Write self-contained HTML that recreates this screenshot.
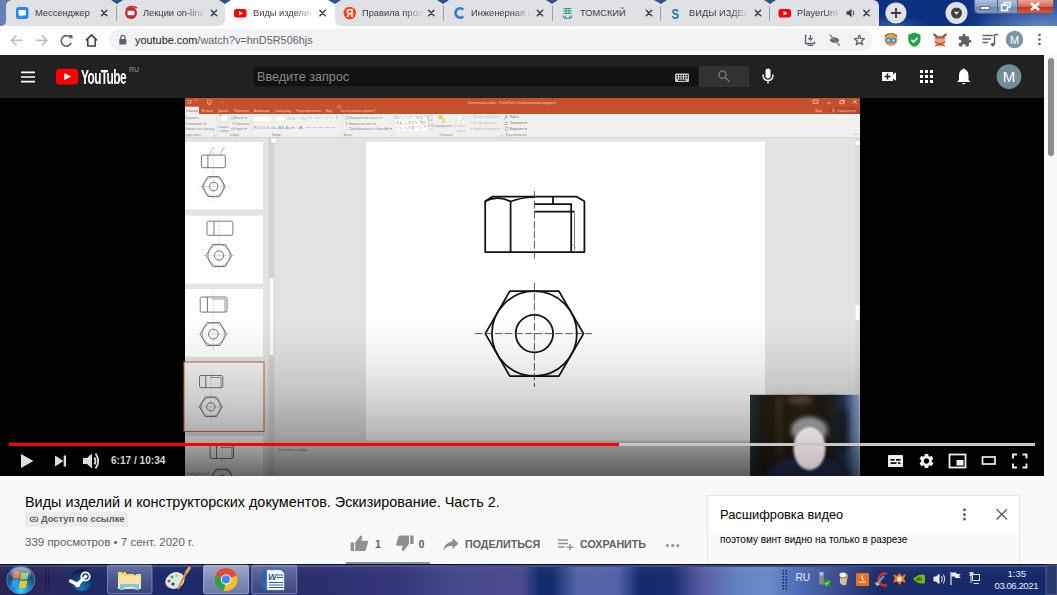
<!DOCTYPE html>
<html><head><meta charset="utf-8">
<style>
*{box-sizing:border-box;margin:0;padding:0}
html,body{width:1057px;height:595px;overflow:hidden;background:#f9f9f9;font-family:"Liberation Sans",sans-serif}
.a{position:absolute}
#frame{left:0;top:0;width:1057px;height:26px;background:radial-gradient(ellipse 70px 20px at 1040px 26px,rgba(120,150,210,.75),rgba(120,150,210,0)),radial-gradient(ellipse 40px 10px at 890px 26px,rgba(90,130,200,.5),rgba(90,130,200,0)),linear-gradient(90deg,#6a7fb2 0,#5a74ae 6px,#2f5aa0 700px,#0c3282 880px,#0a2f7e 960px,#2a5aa8 1057px)}
.tab{top:0;height:26px;background:#dfe1e5}
.tt{top:6.5px;font-size:9.3px;line-height:12px;color:#3c4043;white-space:nowrap;overflow:hidden}
#toolbar{left:0;top:26px;width:1057px;height:29px;background:#fff}
#omni{left:109px;top:29px;width:764px;height:22px;border-radius:11px;background:#f1f3f4}
#ythead{left:0;top:55px;width:1044px;height:43px;background:#212121}
#player{left:0;top:98px;width:1045px;height:378px;background:#000;overflow:hidden}
#sb{left:1044px;top:55px;width:13px;height:509px;background:#f9f9f9}
#task{left:0;top:564px;width:1057px;height:31px;background:linear-gradient(rgba(255,255,255,.05),rgba(255,255,255,0) 40%),linear-gradient(90deg,#2a2454 0,#2a2860 50px,#1c2a68 110px,#1e2a6a 260px,#2c2f6c 310px,#34367a 400px,#46488e 455px,#4a4a90 522px,#122c6c 540px,#142c6c 552px,#5466a8 578px,#5262aa 618px,#142a6e 640px,#1a2c70 672px,#5858a0 700px,#6080c0 735px,#6a8ac8 768px,#5070b8 795px,#3a4a8c 840px,#1a2c6c 880px,#14286a 1057px)}
.sep{top:6px;width:1px;height:15px;background:#9aa0a6}
.fade{-webkit-mask-image:linear-gradient(90deg,#000 70%,transparent)}
.fade2{-webkit-mask-image:linear-gradient(90deg,#000 70%,transparent)}
</style></head><body>
<div id="frame" class="a"></div>

<!-- TAB STRIP -->
<div class="a" style="left:6px;top:0;width:873px;height:26px;background:#dfe1e5;border-radius:6px 6px 0 0"></div>
<div class="a" style="left:219px;top:20px;width:122px;height:6px;background:#fff"></div>
<div class="a" style="left:213px;top:14px;width:12px;height:12px;background:#dfe1e5;border-radius:0 0 6px 0"></div>
<div class="a" style="left:335px;top:14px;width:12px;height:12px;background:#dfe1e5;border-radius:0 0 0 6px"></div>
<div class="a" style="left:225px;top:0;width:110px;height:26px;background:#fff;border-radius:6px 6px 0 0"></div>
<svg class="a" style="left:0;top:0" width="1057" height="6">
<g fill="#2d4f93">
<path d="M111 0 L123 0 L117 4 Z"/><path d="M219 0 L231 0 L225 4 Z"/><path d="M328 0 L341 0 L335 4 Z"/>
<path d="M437 0 L449 0 L443 4 Z"/><path d="M546 0 L558 0 L552 4 Z"/><path d="M654 0 L667 0 L661 4 Z"/><path d="M764 0 L776 0 L770 4 Z"/>
</g></svg>
<div class="a sep" style="left:116px"></div><div class="a sep" style="left:443px"></div><div class="a sep" style="left:552px"></div><div class="a sep" style="left:660px"></div><div class="a sep" style="left:769px"></div>
<div class="a tt" style="left:35px;width:60px">Мессенджер</div>
<div class="a tt fade" style="left:143px;width:62px">Лекции on-line</div>
<div class="a tt fade2" style="left:253px;width:61px">Виды изделий и</div>
<div class="a tt fade" style="left:362px;width:61px">Правила прохождения</div>
<div class="a tt fade" style="left:471px;width:60px">Инженерная графика</div>
<div class="a tt" style="left:580px;width:60px">ТОМСКИЙ</div>
<div class="a tt fade" style="left:689px;width:60px">ВИДЫ ИЗДЕЛИЙ</div>
<div class="a tt fade" style="left:797px;width:42px">PlayerUnknown</div>
<svg class="a" style="left:0;top:0" width="1057" height="26">
<g stroke="#3c4043" stroke-width="1.5" stroke-linecap="round">
<path d="M101.5 10.3 L106.9 15.7 M106.9 10.3 L101.5 15.7"/>
<path d="M211.3 10.3 L216.7 15.7 M216.7 10.3 L211.3 15.7"/>
<path d="M319.9 10.3 L325.3 15.7 M325.3 10.3 L319.9 15.7"/>
<path d="M428.6 10.3 L434 15.7 M434 10.3 L428.6 15.7"/>
<path d="M537.3 10.3 L542.7 15.7 M542.7 10.3 L537.3 15.7"/>
<path d="M646.3 10.3 L651.7 15.7 M651.7 10.3 L646.3 15.7"/>
<path d="M755.3 10.3 L760.7 15.7 M760.7 10.3 L755.3 15.7"/>
<path d="M863.8 10.3 L869.2 15.7 M869.2 10.3 L863.8 15.7"/>
</g>
<!-- favicons -->
<rect x="16" y="7" width="12.5" height="12" rx="2.8" fill="#2787f5"/>
<path d="M18.6 10 H25.9 V15.6 H22.4 L20.9 17 V15.6 H18.6 Z" fill="#fff"/>
<circle cx="131" cy="13" r="6" fill="#c8252c"/><rect x="127.6" y="10.8" width="6.8" height="4.4" fill="#fff"/><path d="M126 9 Q131 4.5 137 8" stroke="#c8252c" stroke-width="1.6" fill="none"/>
<rect x="234" y="9" width="12.5" height="8.6" rx="2.5" fill="#f00"/><path d="M239 11 L243 13.3 L239 15.6 Z" fill="#fff"/>
<circle cx="349.8" cy="13" r="6.3" fill="#fc3f1d"/><text x="346.3" y="17.3" font-size="10" font-weight="bold" fill="#fff" font-family="Liberation Sans">Я</text>
<path d="M463.2 9.6 A4.6 4.6 0 1 0 463.2 16.4" stroke="#3a7ad0" stroke-width="2.8" fill="none"/>
<g fill="none" stroke="#2a9d8f" stroke-width="1.1"><path d="M563.5 8.5 H571.5 M563 11 H572 M563.5 13.5 H571.5 M566 8 V13.5 M569 8 V13.5 M563 15.5 Q563 18.5 567.5 18.5 Q572 18.5 572 15.5 M565.5 15.5 V18 M569.5 15.5 V18"/></g>
<text x="671.5" y="18.8" font-size="14" font-weight="bold" fill="#1a78b0" font-family="Liberation Sans" transform="translate(671.5 0) scale(0.8 1) translate(-671.5 0)">S</text>
<rect x="778.5" y="9" width="12.5" height="8.6" rx="2.5" fill="#f00"/><path d="M783.5 11 L787.5 13.3 L783.5 15.6 Z" fill="#fff"/>
<path d="M846.5 11.2 H848.5 L851.5 8.8 V17.2 L848.5 14.8 H846.5 Z" fill="#3c4043"/><path d="M853 10.5 Q854.6 13 853 15.5" stroke="#3c4043" stroke-width="1" fill="none"/>
<!-- new tab + profile -->
<circle cx="896" cy="13" r="10.6" fill="#dfe1e5"/><path d="M891 13 H901 M896 8 V18" stroke="#3c4043" stroke-width="1.8"/>
<circle cx="956.5" cy="13" r="11" fill="#dfe1e5"/><circle cx="956.5" cy="13" r="5.5" fill="#3c4043"/><path d="M953.8 11.8 H959.2 L956.5 15 Z" fill="#dfe1e5"/>
</svg>
<!-- window controls -->
<div class="a" style="left:974px;top:0;width:80px;height:14px;border:1px solid #4a5f8a;border-top:none;border-radius:0 0 5px 5px;overflow:hidden;background:linear-gradient(#aebfd9,#8aa2c6 50%,#6f8ab4 51%,#7f98c0)">
 <div class="a" style="left:22px;top:0;width:1px;height:14px;background:#4a5f8a"></div>
 <div class="a" style="left:42px;top:0;width:37px;height:14px;background:linear-gradient(#e8a598,#d46450 50%,#c2331c 51%,#d5634a);border-left:1px solid #4a5f8a"></div>
</div>
<svg class="a" style="left:974px;top:0" width="83" height="14">
<rect x="6.5" y="6.5" width="9" height="3" fill="#fff" stroke="#384a6e" stroke-width="0.7"/>
<rect x="30" y="2.5" width="6" height="5" fill="none" stroke="#fff" stroke-width="1.3"/><rect x="27.5" y="5" width="6" height="5.5" fill="#7f98c0" stroke="#fff" stroke-width="1.6"/>
<path d="M57 3 L65 10 M65 3 L57 10" stroke="#fff" stroke-width="2.6"/>
</svg>
<div id="toolbar" class="a"></div>
<div id="omni" class="a"></div>

<!-- TOOLBAR -->
<div class="a" style="left:0;top:14px;width:7px;height:12px;background:#dfe1e5"></div>
<div class="a" style="left:0;top:0;width:6px;height:26px;background:#6a7fb2;border-radius:0 0 5px 0"></div>
<svg class="a" style="left:0;top:26px" width="1057" height="29">
<g transform="translate(0 0.9)"><g fill="none" stroke="#bdc1c6" stroke-width="1.6">
<path d="M22.5 13.5 H11.5 M16.5 8.5 L11.5 13.5 L16.5 18.5"/>
<path d="M36 13.5 H47 M42 8.5 L47 13.5 L42 18.5"/>
</g>
<g fill="none" stroke="#5f6368" stroke-width="1.6">
<path d="M71 11.5 A5.2 5.2 0 1 0 71.2 16"/>
</g>
<path d="M68.5 8 H72.5 V12 Z" fill="#5f6368"/>
<path d="M86 13.5 L91.5 8 L97 13.5 M87.8 12.2 V19 H95.2 V12.2" fill="none" stroke="#3c4043" stroke-width="1.5"/></g>
<!-- lock -->
<rect x="119.3" y="13" width="7" height="5.5" rx="0.6" fill="#5f6368"/>
<path d="M120.8 13 V11.4 A2 2 0 0 1 124.8 11.4 V13" fill="none" stroke="#5f6368" stroke-width="1.3"/>
<!-- omnibox right icons -->
<g fill="none" stroke="#5f6368" stroke-width="1.3">
<path d="M806.5 9.5 H805.5 V17.5 H814.5 V15.5"/><path d="M810.5 9 V14 M808.3 12 L810.5 14.2 L812.7 12"/><path d="M807.5 19.3 H813"/>
<path d="M830 9 L839.5 19.5"/>
</g>
<path d="M829.5 14.2 Q834.5 8.5 839.5 14.2 Q834.5 19.9 829.5 14.2 Z" fill="#5f6368"/>
<path d="M829 8.2 L840.2 20.2" stroke="#f1f3f4" stroke-width="1"/><path d="M829.6 8.6 L840 19.8" stroke="#5f6368" stroke-width="0.9"/>
<path d="M859.40 9.00 L860.75 12.44 L864.44 12.66 L861.59 15.01 L862.52 18.59 L859.40 16.60 L856.28 18.59 L857.21 15.01 L854.36 12.66 L858.05 12.44 Z" fill="none" stroke="#5f6368" stroke-width="1.3" stroke-linejoin="round"/>
<!-- extensions -->
<circle cx="891" cy="13.5" r="6.5" fill="#d9a066"/><path d="M885 11 Q891 4 897 11 L897 9 Q891 5 885 9 Z" fill="#8a5a2a"/>
<circle cx="888.5" cy="14.5" r="2.2" fill="#9fd0f0" stroke="#2d6fb5" stroke-width="1"/><circle cx="893.5" cy="14.5" r="2.2" fill="#9fd0f0" stroke="#2d6fb5" stroke-width="1"/>
<path d="M914.4 6.5 L920.5 8.8 V14 Q920.5 18.5 914.4 21 Q908.3 18.5 908.3 14 V8.8 Z" fill="#1ea446"/><path d="M911.3 13.8 L913.7 16.1 L917.6 11.8" fill="none" stroke="#fff" stroke-width="1.7"/>
<circle cx="940" cy="15" r="5.5" fill="#e8a27a"/><path d="M933.5 8 L937.5 11 M946.5 8 L942.5 11" stroke="#6b4a3a" stroke-width="1.8"/><path d="M934 10.5 H946 L944 12.5 H936 Z" fill="#8a6a5a"/><path d="M935 20 L945 16 M945 20 L935 16" stroke="#c33" stroke-width="1"/>
<path transform="translate(957.6 7.2) scale(0.6)" d="M20.5 11H19V7c0-1.1-.9-2-2-2h-4V3.5C13 2.12 11.88 1 10.5 1S8 2.12 8 3.5V5H4c-1.1 0-1.99.9-1.99 2v3.8H3.5c1.49 0 2.7 1.21 2.7 2.7s-1.21 2.7-2.7 2.7H2V20c0 1.1.9 2 2 2h3.8v-1.5c0-1.49 1.21-2.7 2.7-2.7 1.49 0 2.7 1.21 2.7 2.7V22H17c1.1 0 2-.9 2-2v-4h1.5c1.38 0 2.5-1.12 2.5-2.5S21.88 11 20.5 11z" fill="#5f6368"/>
<g stroke="#5f6368" stroke-width="1.4"><path d="M982.5 9.5 H993 M982.5 13 H991 M982.5 16.5 H988"/></g>
<path d="M994.5 8.5 H998 M994.5 8.5 V18.5" stroke="#5f6368" stroke-width="1.4" fill="none"/><circle cx="992.8" cy="18.6" r="1.9" fill="#5f6368"/>
<circle cx="1014.5" cy="13.5" r="8.7" fill="#7b95a3"/>
<text x="1014.5" y="17.6" font-size="11" fill="#fff" text-anchor="middle" font-family="Liberation Sans">M</text>
<g fill="#5f6368"><circle cx="1039.5" cy="9" r="1.3"/><circle cx="1039.5" cy="13.5" r="1.3"/><circle cx="1039.5" cy="18" r="1.3"/></g>
</svg>
<div class="a" style="left:135px;top:33px;font-size:10.9px;line-height:14px;color:#202124;white-space:nowrap">youtube.com<span style="color:#5f6368">/watch?v=hnD5R506hjs</span></div>
<div id="ythead" class="a"></div>

<!-- YT HEADER -->
<svg class="a" style="left:0;top:55px" width="1044" height="43">
<g stroke="#fff" stroke-width="1.7"><path d="M21 17.3 H35 M21 22 H35 M21 26.7 H35"/></g>
<rect x="56" y="13.7" width="22.3" height="15.8" rx="4" fill="#f00"/>
<path d="M64.3 18 L71 21.6 L64.3 25.2 Z" fill="#fff"/>
<text x="1224" y="29" font-size="12.6" fill="#888" font-family="Liberation Sans"></text>
</svg>
<div class="a" style="left:80.5px;top:65.5px;font-size:20px;line-height:22px;font-weight:bold;color:#fff;letter-spacing:-1px;transform:scaleX(0.595);transform-origin:0 0;white-space:nowrap">YouTube</div>
<div class="a" style="left:129px;top:65px;font-size:7px;line-height:9px;color:#999">RU</div>
<div class="a" style="left:253px;top:66px;width:446px;height:21px;background:#121212;border:1px solid #1c1c1c"></div>
<div class="a" style="left:257px;top:69.8px;font-size:12.6px;line-height:15px;color:#888;white-space:nowrap">Введите запрос</div>
<div class="a" style="left:699px;top:66px;width:50px;height:21px;background:#323232"></div>
<svg class="a" style="left:600px;top:55px" width="444" height="43">
<!-- keyboard -->
<rect x="75" y="18.5" width="14" height="8.5" rx="1" fill="#c8c8c8"/>
<g fill="#121212"><rect x="76.5" y="20" width="1.5" height="1.3"/><rect x="79" y="20" width="1.5" height="1.3"/><rect x="81.5" y="20" width="1.5" height="1.3"/><rect x="84" y="20" width="1.5" height="1.3"/><rect x="86.5" y="20" width="1.5" height="1.3"/>
<rect x="76.5" y="22.3" width="1.5" height="1.3"/><rect x="79" y="22.3" width="1.5" height="1.3"/><rect x="81.5" y="22.3" width="1.5" height="1.3"/><rect x="84" y="22.3" width="1.5" height="1.3"/><rect x="86.5" y="22.3" width="1.5" height="1.3"/>
<rect x="78" y="24.6" width="8" height="1.2"/></g>
<!-- search -->
<circle cx="122.5" cy="19.7" r="3.6" fill="none" stroke="#7a7a7a" stroke-width="1.3"/><path d="M125.2 22.4 L129.3 26.5" stroke="#7a7a7a" stroke-width="1.4"/>
<!-- mic -->
<rect x="165.5" y="13.5" width="5" height="10" rx="2.5" fill="#fff"/><path d="M163 19.5 Q163 25.5 168 25.5 Q173 25.5 173 19.5" fill="none" stroke="#fff" stroke-width="1.4"/><path d="M168 25.5 V28.5" stroke="#fff" stroke-width="1.4"/>
<!-- create -->
<path d="M282 17 H293 V19.5 L296 17.2 V25.8 L293 23.5 V26 H282 Z" fill="#fff"/><path d="M284.5 21.5 H290.5 M287.5 18.5 V24.5" stroke="#212121" stroke-width="1.6"/>
<!-- apps -->
<g fill="#fff"><rect x="320" y="15" width="3" height="3"/><rect x="325" y="15" width="3" height="3"/><rect x="330" y="15" width="3" height="3"/><rect x="320" y="20" width="3" height="3"/><rect x="325" y="20" width="3" height="3"/><rect x="330" y="20" width="3" height="3"/><rect x="320" y="25" width="3" height="3"/><rect x="325" y="25" width="3" height="3"/><rect x="330" y="25" width="3" height="3"/></g>
<!-- bell -->
<path d="M363.7 14.5 Q364 13.5 363.7 14 Q368.5 15.2 368.5 20.5 V25 L370.5 27 H357 L359 25 V20.5 Q359 15.2 363.7 14 Z" fill="#fff"/><circle cx="363.7" cy="14.5" r="1" fill="#fff"/><path d="M361.7 28 Q363.7 30.5 365.7 28 Z" fill="#fff"/>
<!-- avatar -->
<circle cx="409" cy="21.6" r="12.4" fill="#738d99"/>
<text x="409" y="27" font-size="15" fill="#fff" text-anchor="middle" font-family="Liberation Sans">M</text>
</svg>
<div id="player" class="a"></div>
<svg class="a" style="left:0;top:98px" width="1045" height="378" viewBox="0 98 1045 378">
<rect x="185" y="98" width="675" height="378" fill="#e3e3e3"/>
<!-- title bar + tabs -->
<rect x="185" y="98" width="675" height="16" fill="#c5502c"/>
<rect x="185" y="106.7" width="14" height="7.3" fill="#f0f0f0"/>
<g font-family="Liberation Sans" fill="#f3cdbd">
<text x="201.8" y="111.6" textLength="11.0" lengthAdjust="spacingAndGlyphs" font-size="3.6">Вставка</text>
<text x="218" y="111.6" textLength="10.7" lengthAdjust="spacingAndGlyphs" font-size="3.6">Дизайн</text>
<text x="233.8" y="111.6" textLength="15.2" lengthAdjust="spacingAndGlyphs" font-size="3.6">Переходы</text>
<text x="254" y="111.6" textLength="15.6" lengthAdjust="spacingAndGlyphs" font-size="3.6">Анимация</text>
<text x="274.7" y="111.6" textLength="16.5" lengthAdjust="spacingAndGlyphs" font-size="3.6">Слайд-шоу</text>
<text x="295.7" y="111.6" textLength="25.3" lengthAdjust="spacingAndGlyphs" font-size="3.6">Рецензирование</text>
<text x="326.1" y="111.6" textLength="5.7" lengthAdjust="spacingAndGlyphs" font-size="3.6">Вид</text>
<text x="340.9" y="111.6" textLength="34.6" lengthAdjust="spacingAndGlyphs" font-size="3.6">Что вы хотите сделать?</text>
<text x="467.7" y="104" textLength="88.7" lengthAdjust="spacingAndGlyphs" font-size="3.4">Презентация сайта - PowerPoint (Сбой активации продукта)</text>
<text x="815.5" y="111.6" textLength="6.5" lengthAdjust="spacingAndGlyphs" font-size="3.6">Вход</text>
</g>
<rect x="830" y="107" width="30" height="6.5" fill="#b5462a"/>
<circle cx="833.5" cy="109.5" r="1.2" fill="none" stroke="#f3cdbd" stroke-width="0.5"/><path d="M831.5 112.5 Q833.5 110 835.5 112.5" fill="none" stroke="#f3cdbd" stroke-width="0.5"/>
<g font-family="Liberation Sans" fill="#f3cdbd"><text x="837" y="111.6" textLength="19.0" lengthAdjust="spacingAndGlyphs" font-size="3.6">Общий доступ</text></g>
<g font-family="Liberation Sans" fill="#c5502c"><text x="186" y="111.6" textLength="12.0" lengthAdjust="spacingAndGlyphs" font-size="3.6">Главная</text></g>
<path d="M339 108.5 A1.6 1.6 0 1 1 339.01 108.5" fill="none" stroke="#f3cdbd" stroke-width="0.5"/>
<g fill="none" stroke="#e8a890" stroke-width="0.7"><rect x="188" y="100.5" width="3" height="3"/><path d="M196 103 A1.8 1.8 0 1 1 198.5 101"/><rect x="207.5" y="100" width="4" height="3"/><path d="M209.5 103 V104.5 M208 104.5 H211"/><path d="M221 101.5 L222 102.5 L223 101.5"/></g>
<g fill="none" stroke="#f6e0d6" stroke-width="0.7"><rect x="813" y="100" width="5" height="3.2"/><path d="M827.5 103 H831"/><rect x="840" y="100.8" width="3.5" height="3"/><path d="M841 100 H844.3 V103"/><path d="M853 100 L856.5 103.5 M856.5 100 L853 103.5" stroke-width="0.9"/></g>
<rect x="185" y="114" width="675" height="23" fill="#f0f0f0"/>
<rect x="185" y="137" width="675" height="1" fill="#d5d5d5"/>
<g font-family="Liberation Sans" fill="#8c8c8c">
<text x="185" y="118.7" textLength="13.6" lengthAdjust="spacingAndGlyphs" font-size="3.6">Вырезать</text>
<text x="185" y="124.6" textLength="20.4" lengthAdjust="spacingAndGlyphs" font-size="3.6">Копировать ▾</text>
<text x="185" y="130.4" textLength="29.7" lengthAdjust="spacingAndGlyphs" font-size="3.6">Формат по образцу</text>
<text x="185" y="136.3" textLength="15.9" lengthAdjust="spacingAndGlyphs" font-size="3.6">Буфер обмена</text>
<text x="218" y="127.5" textLength="11.0" lengthAdjust="spacingAndGlyphs" font-size="3.6">Создать</text>
<text x="219" y="131.6" textLength="10.0" lengthAdjust="spacingAndGlyphs" font-size="3.6">слайд ▾</text>
<text x="234" y="118.7" textLength="12.9" lengthAdjust="spacingAndGlyphs" font-size="3.6">Макет ▾</text>
<text x="234" y="124.6" textLength="15.7" lengthAdjust="spacingAndGlyphs" font-size="3.6">Сбросить</text>
<text x="234" y="130.4" textLength="13.0" lengthAdjust="spacingAndGlyphs" font-size="3.6">Раздел ▾</text>
<text x="228.7" y="136.3" textLength="10.3" lengthAdjust="spacingAndGlyphs" font-size="3.6">Слайды</text>
<text x="271.9" y="136.3" textLength="9.6" lengthAdjust="spacingAndGlyphs" font-size="3.6">Шрифт</text>
<text x="349" y="118.7" textLength="32.7" lengthAdjust="spacingAndGlyphs" font-size="3.6">Направление текста ▾</text>
<text x="349" y="124.6" textLength="27.0" lengthAdjust="spacingAndGlyphs" font-size="3.6">Выровнять текст ▾</text>
<text x="349" y="130.4" textLength="43.0" lengthAdjust="spacingAndGlyphs" font-size="3.6">Преобразовать в SmartArt ▾</text>
<text x="343.7" y="136.3" textLength="8.0" lengthAdjust="spacingAndGlyphs" font-size="3.6">Абзац</text>
<text x="432.6" y="127.2" textLength="19.3" lengthAdjust="spacingAndGlyphs" font-size="3.6">Упорядочить</text>
<text x="439.4" y="136.3" textLength="13.1" lengthAdjust="spacingAndGlyphs" font-size="3.6">Рисование</text>
<text x="505.3" y="136.3" textLength="21.5" lengthAdjust="spacingAndGlyphs" font-size="3.6">Редактирование</text>
<text x="253" y="128.6" textLength="41.0" lengthAdjust="spacingAndGlyphs" font-size="4" fill="#9a9a9a">Ж К Ч S abc АВ Аа ▾</text>
<text x="298.5" y="128.6" textLength="4.5" lengthAdjust="spacingAndGlyphs" font-size="4.2" fill="#9a9a9a">A</text>
</g>
<g font-family="Liberation Sans" fill="#c2c2c2"><text x="453.6" y="127.2" textLength="13.1" lengthAdjust="spacingAndGlyphs" font-size="3.6">Экспресс-</text><text x="456" y="131.6" textLength="9.0" lengthAdjust="spacingAndGlyphs" font-size="3.6">стили ▾</text><text x="473" y="118.3" textLength="27.0" lengthAdjust="spacingAndGlyphs" font-size="3.6">Заливка фигуры ▾</text><text x="473" y="124.2" textLength="24.0" lengthAdjust="spacingAndGlyphs" font-size="3.6">Контур фигуры ▾</text><text x="473" y="129.8" textLength="27.0" lengthAdjust="spacingAndGlyphs" font-size="3.6">Эффекты фигуры ▾</text></g>
<g font-family="Liberation Sans" fill="#6e6e6e"><text x="509.8" y="118.3" textLength="8.5" lengthAdjust="spacingAndGlyphs" font-size="3.6">Найти</text><text x="509.8" y="124.2" textLength="17.0" lengthAdjust="spacingAndGlyphs" font-size="3.6">Заменить ▾</text><text x="509.8" y="129.8" textLength="17.0" lengthAdjust="spacingAndGlyphs" font-size="3.6">Выделить ▾</text></g>
<rect x="252.6" y="116.4" width="19.3" height="5.4" fill="#fff" stroke="#d8d8d8" stroke-width="0.4"/><rect x="275.3" y="116.4" width="9.6" height="5.4" fill="#fff" stroke="#d8d8d8" stroke-width="0.4"/>
<rect x="220" y="115" width="8" height="7" fill="#fff" stroke="#b8b8b8" stroke-width="0.5"/><rect x="219.5" y="114.6" width="2" height="1.5" fill="#e8b040"/>
<g fill="none" stroke="#a8a8a8" stroke-width="0.5"><rect x="231" y="116.8" width="2.4" height="2.4"/><path d="M231.5 122.5 H233.5 M232.5 122.5 V125.5"/><rect x="231" y="128.6" width="2.4" height="2"/>
<path d="M287.5 120 L289.3 116.6 L291 120 M291.8 120 L293.3 117.4 L294.8 120 M301 120 L303 117 L305 120"/>
<path d="M307 116.5 V119 M308.5 117.7 H312 M316 116.5 V119 M317.5 117.7 H321 M325 117.7 H329 M330 117.7 H333 M337 116.2 V119.5 M336 117 L337 116 L338 117"/>
<path d="M307 127.5 H311 M313 127.5 H317 M319 127.5 H323 M325 127.5 H329 M331 127.5 H335"/>
<rect x="345.4" y="116.8" width="2.6" height="2.4"/><path d="M346.6 122.5 V126 M345.5 123 L346.6 122 L347.7 123"/><path d="M345.5 129.5 H348"/>
</g>
<rect x="394.8" y="115.2" width="37.2" height="15.3" fill="#fff"/>
<g fill="none" stroke="#8a8a8a" stroke-width="0.5"><rect x="395.5" y="116" width="3" height="2.4"/><path d="M400 116 L404 119 M405 116 L409 119 M410 119 V116.2 H413 M414.5 116.2 H417.5 V119 M419 117.5 L421 116 L423 117.5 L421 119 Z M424.5 116.2 H427.5 V119"/>
<path d="M396 124 L397.5 121 L399 124 Z M400.5 121 V124 H402 M404 123 A1.6 1.6 0 0 0 407 123 M408.5 122.6 L410 121.2 L411.5 122.6 L410 124 Z M413 121 V124 M414 122 L415.5 121 L417 124 M419 121 H422 V124 M424 121.5 A1.5 1.5 0 1 0 424.01 121.5"/>
<path d="M396 126.5 L397.5 129.5 M399 126.5 Q401 129 403 129.5 M405 126.5 L407.5 129.5 M409.5 126 V129.5 M412 127 L413 126.2 L414 127 L413 129.5 Z M417 126.5 H419 M421 126 V129.5 M424 126.5 H427"/></g>
<g fill="#f0f0f0" stroke="#b0b0b0" stroke-width="0.4"><rect x="428.5" y="115.5" width="3.5" height="4.5"/><rect x="428.5" y="120.5" width="3.5" height="4.5"/><rect x="428.5" y="125.5" width="3.5" height="4.5"/></g>
<rect x="438.8" y="115.5" width="3.5" height="4" fill="#f0c040"/><rect x="441.5" y="118.5" width="4" height="4.5" fill="#f6d87a"/><rect x="439" y="119" width="3" height="3.5" fill="#fff" stroke="#c8c8c8" stroke-width="0.3"/>
<path d="M457.6 116 H462 L465 119 V123 H457.6 Z" fill="#fff" stroke="#d0d0d0" stroke-width="0.4"/><path d="M460 122 L464.5 117.5" stroke="#a0a0a0" stroke-width="0.6"/>
<g fill="none" stroke="#c8c8c8" stroke-width="0.5"><path d="M469.7 116.5 A1.4 1.4 0 1 0 469.71 116.5 M469.5 121.5 L472 123.5 M470 128 H472 V130 H470 Z"/></g>
<g fill="none" stroke="#5a82c0" stroke-width="0.6"><circle cx="506.3" cy="117" r="1.1"/><path d="M505.5 118 L504.5 119.5"/><path d="M505 122.5 H508 M505 124.5 H508"/><rect x="505.5" y="127.5" width="2.5" height="2.8" stroke="#a0a0a0"/></g>
<g stroke="#dadada" stroke-width="0.5"><path d="M216.8 115 V136.5 M251.4 115 V136.5 M342 115 V136.5 M393.7 115 V136.5 M503 115 V136.5"/></g>
<g fill="none" stroke="#b0b0b0" stroke-width="0.4"><path d="M214 135 L215.5 136.3 H214 Z M340 135 L341.3 136.3 H340 Z M391 135 L392.3 136.3 H391 Z M500.5 135 L501.8 136.3 H500.5 Z"/></g>
<path d="M854 135 L856 133 L858 135" fill="none" stroke="#999" stroke-width="0.5"/>
<!-- thumbnails pane -->
<rect x="185" y="142" width="78" height="67.5" fill="#fff"/>
<rect x="185" y="215.6" width="78" height="68" fill="#fff"/>
<rect x="185" y="288.9" width="78" height="67.8" fill="#fff"/>
<rect x="184" y="362" width="80" height="69.4" fill="#f6f6f6" stroke="#c86a4a" stroke-width="1.1"/>
<rect x="185" y="436.2" width="78" height="40" fill="#fff"/>
<rect x="201.4" y="155.1" width="23.9" height="12.6" rx="1.5" fill="none" stroke="#555" stroke-width="0.8"/><path d="M207.9 155.1 V167.7" stroke="#555" stroke-width="0.8"/><path d="M213.7 152.1 V170.7 M213.7 172.0 V201.2 M199.1 186.6 H228.29999999999998" stroke="#999" stroke-width="0.45" stroke-dasharray="2.5 1" opacity="0.8"/><path d="M202.1 186.6 L207.9 176.6 L219.5 176.6 L225.3 186.6 L219.5 196.6 L207.9 196.6 Z" fill="none" stroke="#555" stroke-width="0.8"/><circle cx="213.7" cy="186.6" r="9.9" fill="none" stroke="#666" stroke-width="0.6"/><circle cx="213.7" cy="186.6" r="4.3" fill="none" stroke="#555" stroke-width="0.8"/><path d="M209 155 L213 148 H215 M219.5 155 L223.5 148 H225.5" stroke="#777" stroke-width="0.5" fill="none"/><rect x="207" y="221.2" width="25.9" height="14.1" rx="1.5" fill="none" stroke="#555" stroke-width="0.8"/><path d="M214.0 221.2 V235.3" stroke="#555" stroke-width="0.8"/><path d="M219 218.2 V238.3 M219 239.7 V271.3 M203.2 255.5 H234.8" stroke="#999" stroke-width="0.45" stroke-dasharray="2.5 1" opacity="0.8"/><path d="M206.2 255.5 L212.6 244.4 L225.4 244.4 L231.8 255.5 L225.4 266.6 L212.6 266.6 Z" fill="none" stroke="#555" stroke-width="0.8"/><circle cx="219" cy="255.5" r="10.9" fill="none" stroke="#666" stroke-width="0.6"/><circle cx="219" cy="255.5" r="4.7" fill="none" stroke="#555" stroke-width="0.8"/><rect x="200.2" y="297" width="26.8" height="15.1" rx="1.5" fill="none" stroke="#555" stroke-width="0.8"/><path d="M207.4 297 V312.1" stroke="#555" stroke-width="0.8"/><path d="M213.4 294 V315.1 M213.4 317.90000000000003 V350.3 M197.20000000000002 334.1 H229.6" stroke="#999" stroke-width="0.45" stroke-dasharray="2.5 1" opacity="0.8"/><path d="M200.2 334.1 L206.8 322.7 L220.0 322.7 L226.6 334.1 L220.0 345.5 L206.8 345.5 Z" fill="none" stroke="#555" stroke-width="0.8"/><circle cx="213.4" cy="334.1" r="11.2" fill="none" stroke="#666" stroke-width="0.6"/><circle cx="213.4" cy="334.1" r="4.9" fill="none" stroke="#555" stroke-width="0.8"/><path d="M212 299 H225 V312" stroke="#555" stroke-width="0.6" fill="none"/><rect x="199.5" y="375.5" width="23.3" height="12.2" rx="1.5" fill="none" stroke="#555" stroke-width="0.8"/><path d="M205.8 375.5 V387.7" stroke="#555" stroke-width="0.8"/><path d="M210.8 372.5 V390.7 M210.8 392.5 V421.1 M196.5 406.8 H225.10000000000002" stroke="#999" stroke-width="0.45" stroke-dasharray="2.5 1" opacity="0.8"/><path d="M199.5 406.8 L205.2 397.0 L216.5 397.0 L222.1 406.8 L216.5 416.6 L205.2 416.6 Z" fill="none" stroke="#555" stroke-width="0.8"/><circle cx="210.8" cy="406.8" r="9.6" fill="none" stroke="#666" stroke-width="0.6"/><circle cx="210.8" cy="406.8" r="4.2" fill="none" stroke="#555" stroke-width="0.8"/><path d="M210 377.5 H221 V387" stroke="#555" stroke-width="0.6" fill="none"/><rect x="210.2" y="445.6" width="23.3" height="12.9" rx="1.5" fill="none" stroke="#555" stroke-width="0.8"/><path d="M216.5 445.6 V458.5" stroke="#555" stroke-width="0.8"/><path d="M222 442.6 V461.5 M222 464.5 V495.5 M206.5 480 H237.5" stroke="#999" stroke-width="0.45" stroke-dasharray="2.5 1" opacity="0.8"/><path d="M209.5 480.0 L215.8 469.2 L228.2 469.2 L234.5 480.0 L228.2 490.8 L215.8 490.8 Z" fill="none" stroke="#555" stroke-width="0.8"/><circle cx="222" cy="480" r="10.6" fill="none" stroke="#666" stroke-width="0.6"/><circle cx="222" cy="480" r="4.6" fill="none" stroke="#555" stroke-width="0.8"/><path d="M221 447.5 H232 V458" stroke="#555" stroke-width="0.6" fill="none"/>
<rect x="268.5" y="138" width="6" height="338" fill="#d4d4d4"/>
<rect x="269.5" y="278" width="4" height="77" fill="#fafafa"/>
<rect x="271" y="138" width="6" height="5" fill="#fff" stroke="#bbb" stroke-width="0.4"/>
<!-- main slide -->
<rect x="366" y="141.6" width="399" height="299" fill="#fff"/>
<rect x="855" y="138" width="5" height="338" fill="#dcdcdc"/>
<rect x="855.5" y="141" width="4" height="4" fill="#fff"/>
<rect x="855.5" y="305" width="4" height="15" fill="#fff"/>
<g fill="none" stroke="#111" stroke-width="1.75" stroke-linejoin="round">
<path d="M485.2 252 V201.2 L492.4 196.7 H576.8 L584.4 201.2 V252 Z"/>
<path d="M510.6 201.5 V252"/>
<path d="M485.2 201.2 Q498 195 510.6 201.5 Q521 197.5 534 197"/>
<path d="M534.4 204 H571.2 V252 M553 197 V204 M534.4 211.5 H574.5"/>
<path d="M485.3 333.6 L509.8 291.1 L558.9 291.1 L583.5 333.6 L558.9 376.1 L509.8 376.1 Z"/>
<circle cx="534.4" cy="333.6" r="42.5"/>
<circle cx="534.4" cy="333.6" r="18.7"/>
</g>
<path d="M574.5 211.5 V250" stroke="#777" stroke-width="0.9"/>
<path d="M572 244 L576 248" stroke="#aaa" stroke-width="0.8"/>
<g stroke="#444" stroke-width="0.9" stroke-dasharray="7.5 2.5" fill="none">
<path d="M534.4 191 V259"/>
<path d="M534.4 283 V387"/>
<path d="M475 333.6 H592"/>
</g>
<g font-family="Liberation Sans" font-size="3.6" fill="#777"><text x="278" y="451">Заметки к слайду</text><text x="186" y="474.5">Слайд 4 из 21</text></g>
<!-- webcam -->
<defs>
<linearGradient id="wc" x1="0" y1="0" x2="1" y2="0">
<stop offset="0" stop-color="#1d3a3a"/><stop offset="0.12" stop-color="#241e14"/><stop offset="0.5" stop-color="#2e2212"/><stop offset="0.72" stop-color="#1c1a16"/><stop offset="0.86" stop-color="#2a3a5a"/><stop offset="0.95" stop-color="#6f8fc0"/><stop offset="1" stop-color="#9ab0d0"/>
</linearGradient>
<filter id="bl"><feGaussianBlur stdDeviation="2.2"/></filter>
<filter id="bl2"><feGaussianBlur stdDeviation="1.2"/></filter>
</defs>
<rect x="750" y="394.8" width="109.4" height="81.2" fill="url(#wc)"/>
<g filter="url(#bl)">
<rect x="775" y="396" width="8" height="60" fill="#4a3820" opacity="0.55"/>
<rect x="826" y="396" width="7" height="60" fill="#3a2c18" opacity="0.5"/>
<ellipse cx="800" cy="400" rx="12" ry="5" fill="#7a7060" opacity="0.5"/>
<ellipse cx="808" cy="482" rx="44" ry="26" fill="#2a3a66"/>
<ellipse cx="809" cy="430" rx="18" ry="13" fill="#bcbcbc"/>
<rect x="838" y="410" width="10" height="40" fill="#101418" opacity="0.6"/>
</g>
<!-- gradient overlay -->
<defs><linearGradient id="yg" x1="0" y1="0" x2="0" y2="1">
<stop offset="0" stop-color="#000" stop-opacity="0"/>
<stop offset="0.25" stop-color="#000" stop-opacity="0.06"/>
<stop offset="0.5" stop-color="#000" stop-opacity="0.16"/>
<stop offset="0.75" stop-color="#000" stop-opacity="0.3"/>
<stop offset="1" stop-color="#000" stop-opacity="0.6"/>
</linearGradient></defs>
<rect x="0" y="320" width="1045" height="156" fill="url(#yg)"/>
<defs><linearGradient id="face" x1="0" y1="0" x2="0" y2="1"><stop offset="0" stop-color="#e4dcde"/><stop offset="1" stop-color="#c2babc"/></linearGradient></defs>
<ellipse cx="809.5" cy="448.5" rx="16" ry="21.5" fill="url(#face)" filter="url(#bl2)"/>
</svg>

<div id="sb" class="a"></div>
<!-- PLAYER CONTROLS -->
<div class="a" style="left:9px;top:443px;width:1026px;height:2.7px;background:#c6c6c6"></div>
<div class="a" style="left:9px;top:443px;width:610px;height:2.7px;background:#f00"></div>
<svg class="a" style="left:0;top:450px" width="1045" height="24">
<path d="M21 4 L33.5 11 L21 18 Z" fill="#ddd"/>
<path d="M55 5.5 L63.5 11 L55 16.5 Z" fill="#ddd"/><rect x="63.7" y="5.5" width="2.3" height="11" fill="#ddd"/>
<path d="M83 8 H87 L92 3.5 V18.5 L87 14 H83 Z" fill="#ddd"/>
<path d="M94.5 7.5 Q96.5 11 94.5 14.5" stroke="#ddd" stroke-width="1.8" fill="none"/>
<path d="M95.5 3.5 Q101 11 95.5 18.5" stroke="#ddd" stroke-width="1.8" fill="none"/>
<!-- right -->
<rect x="888" y="5" width="15" height="12" rx="1" fill="#eee"/>
<g fill="#000"><rect x="890.5" y="9" width="4" height="1.6"/><rect x="896" y="9" width="4.5" height="1.6"/><rect x="890.5" y="12.3" width="6" height="1.6"/><rect x="898" y="12.3" width="2.5" height="1.6"/></g>
<path transform="translate(917.6 2.1) scale(0.74)" fill="#eee" d="M19.14 12.94c.04-.3.06-.61.06-.94 0-.32-.02-.64-.07-.94l2.03-1.58c.18-.14.23-.41.12-.61l-1.92-3.32c-.12-.22-.37-.29-.59-.22l-2.39.96c-.5-.38-1.03-.7-1.620-.94l-.36-2.54c-.04-.24-.24-.41-.48-.41h-3.84c-.24 0-.43.17-.47.41l-.36 2.540c-.59.24-1.13.57-1.62.94l-2.39-.96c-.22-.08-.47 0-.59.22L2.74 8.87c-.12.21-.08.47.12.61l2.03 1.58c-.05.3-.09.63-.09.94s.02.64.07.94l-2.03 1.58c-.18.14-.23.41-.12.61l1.92 3.32c.12.22.37.29.59.22l2.39-.96c.5.38 1.03.7 1.62.94l.36 2.54c.05.24.24.41.48.41h3.84c.24 0 .44-.17.47-.41l.36-2.54c.59-.24 1.13-.56 1.62-.94l2.39.96c.22.08.47 0 .59-.22l1.92-3.32c.12-.22.07-.47-.12-.61l-2.01-1.58zM12 15.6c-1.98 0-3.6-1.62-3.6-3.6s1.62-3.6 3.6-3.6 3.6 1.62 3.6 3.6-1.62 3.6-3.6 3.6z"/>
<rect x="949.5" y="4.5" width="16" height="13" fill="none" stroke="#eee" stroke-width="1.8"/><rect x="956.5" y="10" width="7" height="5.5" fill="#eee"/>
<rect x="982.5" y="7" width="12.5" height="7" fill="none" stroke="#eee" stroke-width="1.7"/>
<path d="M1013 8.5 V4.5 H1017 M1022.5 4.5 H1026.5 V8.5 M1026.5 13.5 V17.5 H1022.5 M1017 17.5 H1013 V13.5" fill="none" stroke="#eee" stroke-width="1.9"/>
</svg>
<div class="a" style="left:111px;top:454.3px;font-size:10.1px;line-height:14px;font-weight:bold;color:#d8d8d8;white-space:nowrap">6:17 / 10:34</div>
<!-- scrollbar thumb -->
<div class="a" style="left:1048px;top:58px;width:6px;height:98px;border-radius:3px;background:#8c8c8c"></div>

<div id="task" class="a"></div>

<!-- PAGE CONTENT -->
<div class="a" style="left:25px;top:493.5px;font-size:14.4px;line-height:17px;color:#030303;white-space:nowrap">Виды изделий и конструкторских документов. Эскизирование. Часть 2.</div>
<div class="a" style="left:25px;top:512px;width:103px;height:14.6px;background:#ececec;border-radius:2px"></div>
<svg class="a" style="left:25px;top:512px" width="20" height="15"><rect x="5.3" y="5.3" width="7.4" height="4" rx="2" fill="none" stroke="#606060" stroke-width="1.1"/><path d="M7.5 7.3 H10.5" stroke="#606060" stroke-width="1"/></svg>
<div class="a" style="left:41px;top:513.5px;font-size:9.3px;line-height:11px;font-weight:bold;color:#606060;white-space:nowrap">Доступ по ссылке</div>
<div class="a" style="left:25px;top:534.5px;font-size:11.5px;line-height:14px;color:#606060;white-space:nowrap">339 просмотров • 7 сент. 2020 г.</div>
<svg class="a" style="left:340px;top:530px" width="350" height="36">
<path d="M10.6 12.5 H14 V21 H10.6 Z" fill="#909090"/>
<path d="M15.2 12.5 L20.5 5.6 Q22.2 5 22.4 7 L21.6 10.8 H27 Q28.3 11 28 12.6 L25.6 20.2 Q25.2 21 24.3 21 H15.2 Z" fill="#909090"/>
<path d="M73.6 14 H70.2 V5.5 H73.6 Z" fill="#909090" transform="translate(0,0)"/>
<path d="M69 14 L63.7 20.9 Q62 21.5 61.8 19.5 L62.6 15.7 H57.2 Q55.9 15.5 56.2 13.9 L58.6 6.3 Q59 5.5 59.9 5.5 H69 Z" fill="#909090"/>
<path d="M118.5 13.5 L112.5 8 V11.2 Q105 12.2 102.8 21 Q106.5 15.8 112.5 15.8 V19 Z" fill="#909090"/>
<g stroke="#909090" stroke-width="1.4"><path d="M218 10 H228 M218 13.5 H228 M218 17 H224.5 M230 14 V20.5 M226.8 17.2 H233.3"/></g>
<g fill="#909090"><circle cx="327.3" cy="15.5" r="1.5"/><circle cx="332.6" cy="15.5" r="1.5"/><circle cx="337.9" cy="15.5" r="1.5"/></g>
<rect x="6" y="32" width="84" height="2" fill="#909090"/>
</svg>
<div class="a" style="left:375px;top:538px;font-size:10.7px;line-height:13px;font-weight:bold;color:#606060">1</div>
<div class="a" style="left:418.5px;top:538px;font-size:10.7px;line-height:13px;font-weight:bold;color:#606060">0</div>
<div class="a" style="left:465px;top:538px;font-size:10.7px;line-height:13px;font-weight:bold;color:#606060;white-space:nowrap">ПОДЕЛИТЬСЯ</div>
<div class="a" style="left:580px;top:538px;font-size:10.7px;line-height:13px;font-weight:bold;color:#606060;white-space:nowrap">СОХРАНИТЬ</div>
<!-- transcript panel -->
<div class="a" style="left:707px;top:495px;width:313px;height:70px;border:1px solid #e5e5e5;border-bottom:none;background:#f9f9f9"></div>
<div class="a" style="left:708px;top:496px;width:311px;height:38.5px;background:#fff"></div>
<div class="a" style="left:720px;top:507px;font-size:12.85px;line-height:15px;color:#030303;white-space:nowrap">Расшифровка видео</div>
<div class="a" style="left:720px;top:534px;font-size:10px;line-height:12px;color:#030303;white-space:nowrap">поэтому винт видно на только в разрезе</div>
<svg class="a" style="left:950px;top:500px" width="70" height="30">
<g fill="#606060"><circle cx="14.5" cy="9.8" r="1.5"/><circle cx="14.5" cy="14.4" r="1.5"/><circle cx="14.5" cy="19" r="1.5"/></g>
<path d="M46.5 9.2 L57 19.6 M57 9.2 L46.5 19.6" stroke="#606060" stroke-width="1.4"/>
</svg>

<!-- TASKBAR -->
<div class="a" style="left:0;top:564px;width:1057px;height:1px;background:#0b0f24"></div>
<div class="a" style="left:0;top:565px;width:1057px;height:2px;background:linear-gradient(90deg,#3a4270,#4a5a92 300px,#3a4a80 700px,#3b4f86)"></div>
<svg class="a" style="left:0;top:564px" width="1057" height="31">
<defs>
<radialGradient id="orb" cx="0.5" cy="0.4" r="0.6"><stop offset="0" stop-color="#7ab8e0"/><stop offset="0.6" stop-color="#2a6aa8"/><stop offset="1" stop-color="#0e3a6a"/></radialGradient>
<linearGradient id="btn" x1="0" y1="0" x2="0" y2="1"><stop offset="0" stop-color="#9aa6c8" stop-opacity="0.55"/><stop offset="1" stop-color="#5a6a9a" stop-opacity="0.45"/></linearGradient>
<linearGradient id="btn2" x1="0" y1="0" x2="0" y2="1"><stop offset="0" stop-color="#c8d0e8" stop-opacity="0.75"/><stop offset="1" stop-color="#8a98c0" stop-opacity="0.7"/></linearGradient>
</defs>
<defs><radialGradient id="orb2" cx="0.5" cy="0.85" r="0.75"><stop offset="0" stop-color="#30e0ff"/><stop offset="0.35" stop-color="#1a8ad0"/><stop offset="0.75" stop-color="#15507f"/><stop offset="1" stop-color="#2a5a80"/></radialGradient>
<linearGradient id="orbhi" x1="0" y1="0" x2="0" y2="1"><stop offset="0" stop-color="#fff" stop-opacity="0.55"/><stop offset="1" stop-color="#fff" stop-opacity="0.05"/></linearGradient>
<radialGradient id="stm" cx="0.5" cy="0.9" r="0.9"><stop offset="0" stop-color="#1a7ab8"/><stop offset="0.6" stop-color="#123d6e"/><stop offset="1" stop-color="#111a3a"/></radialGradient></defs>
<circle cx="20.8" cy="16" r="14" fill="url(#orb2)" stroke="#6a8ab0" stroke-width="0.8"/>
<path d="M14 7.5 Q17 6.5 20 8 L19 15 Q16 13.5 12.8 14.7 Z" fill="#f25a1e"/>
<path d="M21.2 8.3 Q24.5 9.8 28.5 8 L27.5 15 Q24 16.5 20.2 15.3 Z" fill="#8ac43a"/>
<path d="M12.6 15.9 Q15.8 14.8 18.8 16.2 L17.8 23.2 Q14.6 21.8 11.5 23 Z" fill="#28a0f0"/>
<path d="M20 16.5 Q23.8 17.8 27.3 16.2 L26.3 23.2 Q22.6 24.8 19 23.5 Z" fill="#fbc02a"/>
<ellipse cx="20.8" cy="9.5" rx="10.5" ry="6.5" fill="url(#orbhi)"/>
<g fill="#0a0f30" opacity="0.8">
<rect x="45" y="6" width="1.5" height="1.5"/><rect x="48" y="6" width="1.5" height="1.5"/><rect x="45" y="9" width="1.5" height="1.5"/><rect x="48" y="9" width="1.5" height="1.5"/><rect x="45" y="12" width="1.5" height="1.5"/><rect x="48" y="12" width="1.5" height="1.5"/><rect x="45" y="15" width="1.5" height="1.5"/><rect x="48" y="15" width="1.5" height="1.5"/><rect x="45" y="18" width="1.5" height="1.5"/><rect x="48" y="18" width="1.5" height="1.5"/><rect x="45" y="21" width="1.5" height="1.5"/><rect x="48" y="21" width="1.5" height="1.5"/><rect x="45" y="24" width="1.5" height="1.5"/><rect x="48" y="24" width="1.5" height="1.5"/>
</g>
<!-- steam -->
<circle cx="81.5" cy="16" r="11" fill="url(#stm)"/>
<circle cx="85.5" cy="12.5" r="4.2" fill="none" stroke="#fff" stroke-width="1.8"/><circle cx="85.5" cy="12.5" r="1.9" fill="#fff"/>
<path d="M70.5 17 L77.5 20.5 L83 15" stroke="#fff" stroke-width="3.4" fill="none" stroke-linecap="round"/><circle cx="77.5" cy="20.5" r="2.8" fill="#fff"/>
<!-- explorer btn -->
<rect x="107.5" y="1.3" width="44.5" height="28.5" rx="2" fill="url(#btn)" stroke="#8a96c0" stroke-width="0.8"/>
<path d="M118 8 H126 L128 10 H141 V25 H118 Z" fill="#f0d884"/><path d="M118 12 H141 V25 H118 Z" fill="#f6e4a0"/>
<rect x="122" y="7" width="2" height="2" fill="#3a3"/><rect x="126" y="8" width="2" height="2" fill="#c33"/><rect x="134" y="9" width="2" height="2" fill="#36c"/>
<path d="M120 20 H139 V26 H135 V23 H124 V26 H120 Z" fill="#7ac8ee"/>
<!-- paint -->
<ellipse cx="175" cy="16.5" rx="10" ry="8" fill="#d8e8f0" transform="rotate(-25 175 16.5)"/>
<circle cx="169" cy="17" r="1.5" fill="#e33"/><circle cx="172" cy="13" r="1.5" fill="#3b3"/><circle cx="176.5" cy="11.5" r="1.5" fill="#fb0"/><circle cx="173" cy="20" r="1.5" fill="#236"/>
<path d="M178 25 L187 7" stroke="#e88a2a" stroke-width="2.2"/><path d="M186 9 L190 3" stroke="#d8a868" stroke-width="3"/>
<!-- chrome btn -->
<rect x="203.6" y="1.3" width="45" height="28.5" rx="2" fill="url(#btn2)" stroke="#b0bcd8" stroke-width="0.8"/>
<circle cx="226" cy="15.4" r="11.5" fill="#f6c026"/>
<path d="M226 15.4 L215.19 11.47 A11.5 11.5 0 0 1 236.81 11.47 Z" fill="#de4a3a"/>
<path d="M226 15.4 L224 26.73 A11.5 11.5 0 0 1 215.19 11.47 Z" fill="#2ba14e"/>
<circle cx="226" cy="15.4" r="5.2" fill="#fff"/><circle cx="226" cy="15.4" r="4.1" fill="#4285f4"/>
<!-- word btn -->
<rect x="251.8" y="1.3" width="45" height="28.5" rx="2" fill="url(#btn)" stroke="#8a96c0" stroke-width="0.8"/>
<path d="M262 9 Q265 4.5 271 4.5 H281 L284 7.5 V26 H266 Q262 26 262 22 Z" fill="#2a62c0"/>
<path d="M267 6 H281 L284 9 V26 H267 Z" fill="#fff" stroke="#9ab0d8" stroke-width="0.6"/>
<text x="268" y="16" font-size="9" font-weight="bold" font-style="italic" fill="#1d4fa8" font-family="Liberation Sans">W</text>
<g stroke="#2a5ab8" stroke-width="1"><path d="M277 11 H283 M277 13.5 H283 M269 18.5 H283 M269 21 H283 M269 23.5 H283"/></g>
<!-- tray -->
<g fill="#0a0f30" opacity="0.8">
<rect x="782.5" y="6" width="1.5" height="1.5"/><rect x="785.5" y="6" width="1.5" height="1.5"/><rect x="782.5" y="9" width="1.5" height="1.5"/><rect x="785.5" y="9" width="1.5" height="1.5"/><rect x="782.5" y="12" width="1.5" height="1.5"/><rect x="785.5" y="12" width="1.5" height="1.5"/><rect x="782.5" y="15" width="1.5" height="1.5"/><rect x="785.5" y="15" width="1.5" height="1.5"/><rect x="782.5" y="18" width="1.5" height="1.5"/><rect x="785.5" y="18" width="1.5" height="1.5"/><rect x="782.5" y="21" width="1.5" height="1.5"/><rect x="785.5" y="21" width="1.5" height="1.5"/><rect x="782.5" y="24" width="1.5" height="1.5"/><rect x="785.5" y="24" width="1.5" height="1.5"/>
</g>
<rect x="819.5" y="8" width="4" height="4" fill="#c0c0c0"/><rect x="819" y="11.5" width="5" height="9" fill="#888"/><circle cx="827" cy="19" r="3.5" fill="#2a9a2a"/><path d="M825 19 L826.5 20.5 L829 17.5" stroke="#fff" stroke-width="1" fill="none"/>
<path d="M840 9 Q845 7 848 11 L846 21 Q842 22 840 19 Z" fill="#d8c090"/><ellipse cx="843" cy="11" rx="4" ry="3" fill="#eee" stroke="#333" stroke-width="0.6"/>
<rect x="856" y="9" width="13" height="13" rx="1" fill="#e87020"/><path d="M859 18 H866 M862.5 11 Q861 14 863.5 16" stroke="#fff" stroke-width="1.1" fill="none"/>
<path d="M887 10 A6 6 0 1 0 887 21" stroke="#d83020" stroke-width="2.6" fill="none"/><path d="M876 21 L884 12" stroke="#6a9ad8" stroke-width="2"/><path d="M874 18 L878 22 L880 20 Z" fill="#e8c070"/>
<path d="M899.5 9 L902 12 L906 10 L904 14.5 L906 19 L902 17.5 L899.5 21 L897 17.5 L893 19 L895 14.5 L893 10 L897 12 Z" fill="#f07a1a"/><circle cx="899.5" cy="15" r="2.5" fill="#fff" opacity="0.8"/>
<path d="M913 15 Q919 9 925 11 V19 Q919 21 913 15 Z" fill="#76b900"/><ellipse cx="919" cy="15" rx="3" ry="2" fill="#4a7a00"/>
<path d="M933.5 12.5 H936 L939.5 9.5 V20.5 L936 17.5 H933.5 Z" fill="#e8e8e8"/><path d="M941.5 12 Q943 15 941.5 18 M943.5 10.5 Q946 15 943.5 19.5" stroke="#e8e8e8" stroke-width="1" fill="none"/>
<path d="M951 8 V21" stroke="#ddd" stroke-width="1.3"/><path d="M951.5 8.5 H956 L957 10 H961 L959 12 L961 14 H955.5 L954.5 12.5 H951.5 Z" fill="#eee"/>
<rect x="969.5" y="8" width="4" height="4" fill="#ccc"/><rect x="972.5" y="10.5" width="7" height="6" fill="#1a2a4a" stroke="#ddd" stroke-width="1"/><path d="M971 12 V19 M973.5 19.5 H979" stroke="#ddd" stroke-width="1"/>
<rect x="1046" y="1" width="11" height="30" fill="#2a3a6a" stroke="#5a6a9a" stroke-width="0.8"/>
</svg>
<div class="a" style="left:795.5px;top:571.5px;font-size:10.2px;line-height:11px;color:#e8ecf4">RU</div>
<div class="a" style="left:1007.5px;top:568.5px;font-size:9.6px;line-height:10px;color:#e8ecf4">1:35</div>
<div class="a" style="left:994.5px;top:581px;font-size:9.6px;line-height:10px;color:#e8ecf4;letter-spacing:-0.45px">03.06.2021</div>
</body></html>
